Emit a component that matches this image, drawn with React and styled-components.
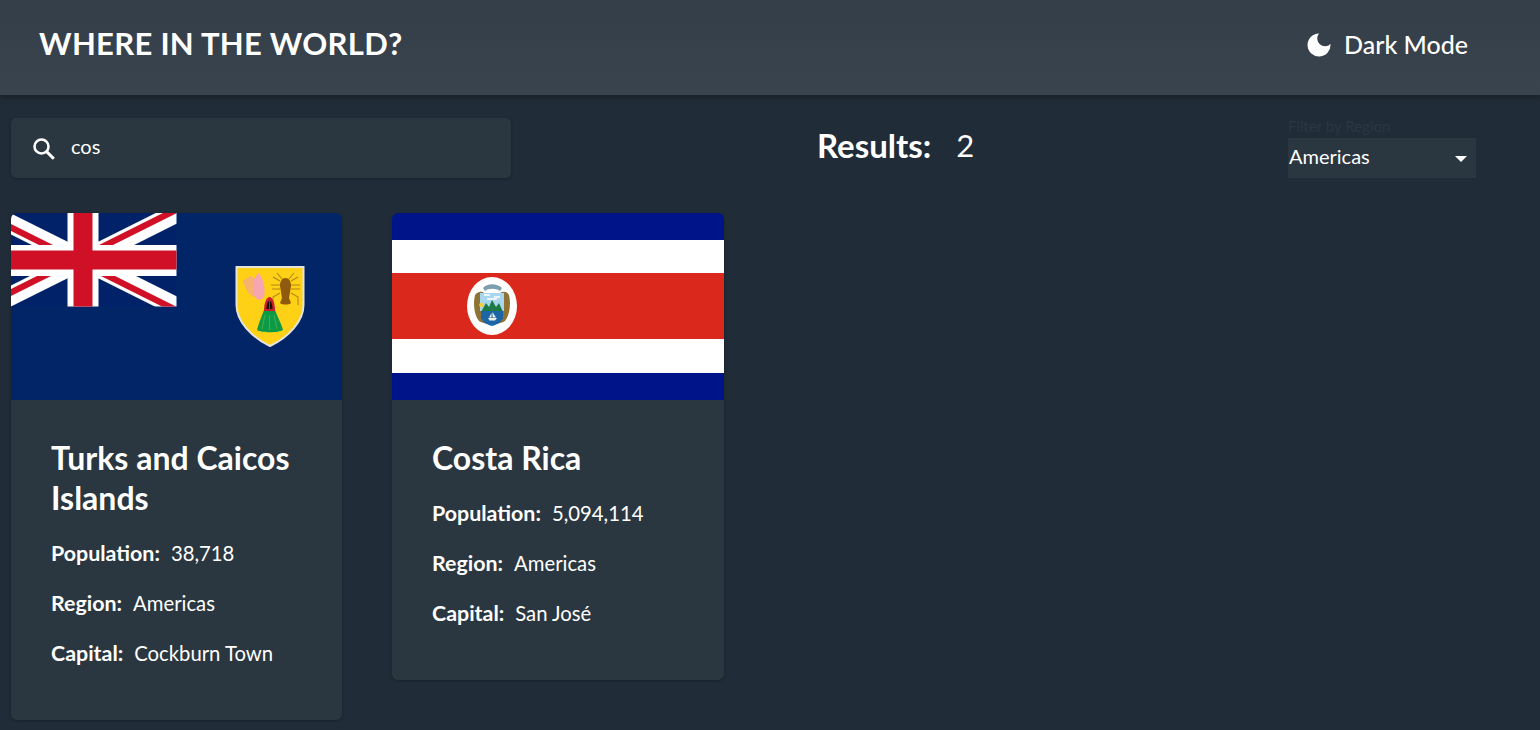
import React from 'react';
import styled, { createGlobalStyle } from 'styled-components';

const GlobalStyle = createGlobalStyle`
  html, body {
    margin: 0;
    padding: 0;
    background: #202c37;
    color: #fff;
    font-family: Lato, "Open Sans", sans-serif;
    overflow: hidden;
  }
`;

const Page = styled.div`
  height: 730px;
  overflow: hidden;
`;

const Header = styled.header`
  height: 95px;
  box-sizing: border-box;
  padding: 0 72px 8px 39px;
  display: flex;
  align-items: center;
  justify-content: space-between;
  background: linear-gradient(#343e48, #3a444e);
  box-shadow: 0 2px 6px rgba(0, 0, 0, 0.3);
`;

const Title = styled.h1`
  margin: 0 0 2px;
  font-size: 31px;
  font-weight: 700;
  letter-spacing: 0.3px;
`;

const ThemeToggle = styled.div`
  display: flex;
  align-items: center;
  gap: 13px;
  font-size: 25px;
  font-weight: 500;
`;

const Main = styled.main`
  padding: 23px 0 0 11px;
`;

const Toolbar = styled.div`
  display: grid;
  grid-template-columns: 500px 1fr 188px;
  height: 60px;
  padding-right: 64px;
  margin-bottom: 35px;
`;

const Search = styled.div`
  display: flex;
  align-items: center;
  gap: 15px;
  padding-left: 20px;
  background: #2b3740;
  border-radius: 5px;
  box-shadow: 0 1px 3px rgba(0, 0, 0, 0.25);
  font-size: 20px;
`;

const SearchText = styled.span`
  margin-bottom: 5px;
`;

const Results = styled.div`
  display: flex;
  align-items: center;
  gap: 25px;
  padding: 0 0 6px 306px;
  font-size: 33px;
`;

const ResultsLabel = styled.strong`
  font-weight: 700;
`;

const ResultsValue = styled.span`
  font-size: 31px;
  font-weight: 400;
`;

const Filter = styled.div`
  display: flex;
  flex-direction: column;
  justify-content: flex-end;
`;

const FilterLabel = styled.div`
  height: 20px;
  font-size: 15px;
  line-height: 16px;
  color: #2a3742;
`;

const Select = styled.div`
  height: 40px;
  padding: 0 9px 4px 1px;
  box-sizing: border-box;
  display: flex;
  align-items: center;
  justify-content: space-between;
  background: #2b3740;
  font-size: 20px;
`;

const Caret = styled.span`
  width: 0;
  height: 0;
  margin-top: 6px;
  border-left: 6.500px solid transparent;
  border-right: 6.500px solid transparent;
  border-top: 6.500px solid #fff;
`;

const Cards = styled.div`
  display: flex;
  align-items: flex-start;
  gap: 50px;
`;

const Card = styled.article`
  width: ${(props) => props.$width}px;
  background: #2b3740;
  border-radius: 6px;
  overflow: hidden;
  box-shadow: 0 1px 3px rgba(0, 0, 0, 0.25);
`;

const Flag = styled.svg`
  display: block;
  width: 100%;
  height: 187px;
`;

const CardBody = styled.div`
  padding: 38px 40px 42px;
`;

const CardTitle = styled.h2`
  margin: 0 0 10px;
  font-size: 32px;
  line-height: 40px;
  font-weight: 700;
`;

const Stat = styled.div`
  height: 50px;
  font-size: 20.300px;
  line-height: 50px;
  font-weight: 400;
  white-space: nowrap;
`;

const StatLabel = styled.strong`
  font-size: 21.400px;
  font-weight: 700;
  margin-right: 11px;
`;

const MoonSvg = styled.svg`
  margin-top: 2px;
`;

const MoonIcon = () => (
  <MoonSvg width="24" height="24" viewBox="0 0 24 24">
    <path d="M12 .5A11.500 11.500 0 1 0 23.500 11 7.800 7.800 0 0 1 12 .5Z" fill="#fff" />
  </MoonSvg>
);

const SearchIcon = () => (
  <svg width="25" height="25" viewBox="0 0 25 25" fill="none" stroke="#fff">
    <circle cx="10.500" cy="10.500" r="7" strokeWidth="2.600" />
    <path d="M15.600 15.600 22.800 22.800" strokeWidth="3" />
  </svg>
);

const UnionJack = () => (
  <g clipPath="url(#canton)">
    <path d="M0 0H165V93.500H0Z" fill="#012169" />
    <path d="M-22 0 166 94M166 0-22 94" stroke="#fff" strokeWidth="19" />
    <path d="M0 11 72 47V54L0 18ZM72 47 166 0V-7L72 40ZM72 47 166 94V101L72 54ZM0 83 72 47V40L0 76Z" fill="#cf1027" />
    <path d="M72 0V94M0 47.500H166" stroke="#fff" strokeWidth="31" />
    <path d="M72 0V94M0 47H166" stroke="#cf1027" strokeWidth="19" />
  </g>
);

const TurksShield = () => (
  <g filter="url(#soft)">
    <path d="M225.500 54H292.500V92C292.500 108 278 124 259 133 240 124 225.500 108 225.500 92Z" fill="#fed014" stroke="#e4e4dc" strokeWidth="2" />
    <path d="M232 68 240 63 243 66 247 60C252 64 255 74 253 84 250 88 246 87 244 84 238 82 235 76 232 68Z" fill="#f5a6b0" />
    <path d="M232 68 240 63 243 66C241 72 242 79 244 84 238 82 235 76 232 68Z" fill="#f6b26e" />
    <path d="M271 66 266 60M278 66 283 60M269 68 262 64M280 68 287 64M269 72H260M280 72H289M269 76H261M280 76H289M269 80 262 84V92M280 80 287 84V92" fill="none" stroke="#b5851f" strokeWidth="1.100" />
    <path d="M274.500 65C278 65 280 68 280 73L278 85 280 90C278 92 271 92 269 90L271 85 269 73C269 68 271 65 274.500 65Z" fill="#8f5a08" />
    <path d="M253 97H264C267 105 271 112 272 117 268 120 250 120 246 117 247 112 250 105 253 97Z" fill="#0f9a45" />
    <path d="M253 98C253 89 256 84 258.500 84 261 84 264 89 264 98Z" fill="#cc1b2e" />
    <path d="M255.500 96C255.500 91 257 88 258 88V96ZM259 96V88C260 88 261.500 91 261.500 96Z" fill="#1a1010" />
    <path d="M254 102 251 116M258.500 102V117M263 102 266 116" stroke="#58b558" strokeWidth=".7" />
  </g>
);

const TurksFlag = () => (
  <Flag viewBox="0 0 331 187" preserveAspectRatio="none">
    <defs>
      <clipPath id="canton"><rect width="165.500" height="93.500" /></clipPath>
      <filter id="soft"><feGaussianBlur stdDeviation=".4" /></filter>
    </defs>
    <rect width="331" height="187" fill="#012566" />
    <UnionJack />
    <TurksShield />
  </Flag>
);

const CostaRicaEmblem = () => (
  <g filter="url(#softer)">
    <path d="M83 82C86 78 90 78 92 80L108 80C111 78 115 78 117 82 119 90 118 102 113 108 108 112 92 112 87 108 82 102 81 90 83 82Z" fill="#8f7336" />
    <path d="M91 75C95 70 105 70 110 75L108 78C104 75 96 75 93 78Z" fill="#7d9fb0" />
    <path d="M88 80H112V98H88Z" fill="#a8d6ee" />
    <path d="M92 82H98M102 84H108M95 86H105" stroke="#fff" strokeWidth="1.400" />
    <circle cx="89.500" cy="92" r="2.300" fill="#f2d13a" />
    <path d="M89 99 94 90 97 94 100 87 104 94 107 90 111 99Z" fill="#1f7a42" />
    <path d="M89 98H111V105C109 110 104 112 100 113 96 112 91 110 89 105Z" fill="#1c66a8" />
    <path d="M96 105H105L103 107.500H97.500ZM97 104.500 99.500 100V104.500ZM100.500 99 104 104.500H100.500Z" fill="#eef0e8" />
  </g>
);

const CostaRicaFlag = () => (
  <Flag viewBox="0 0 332 187" preserveAspectRatio="none">
    <defs>
      <filter id="softer"><feGaussianBlur stdDeviation=".45" /></filter>
    </defs>
    <rect width="332" height="187" fill="#00148a" />
    <rect y="27" width="332" height="133" fill="#fff" />
    <rect y="60" width="332" height="66" fill="#da291c" />
    <ellipse cx="100" cy="93" rx="25" ry="29" fill="#fff" />
    <CostaRicaEmblem />
  </Flag>
);

const countries = [
  {
    name: 'Turks and Caicos Islands',
    population: '38,718',
    region: 'Americas',
    capital: 'Cockburn Town',
    width: 331,
    FlagImage: TurksFlag
  },
  {
    name: 'Costa Rica',
    population: '5,094,114',
    region: 'Americas',
    capital: 'San José',
    width: 332,
    FlagImage: CostaRicaFlag
  }
];

export default function App() {
  return (
    <Page>
      <GlobalStyle />
      <Header>
        <Title>WHERE IN THE WORLD?</Title>
        <ThemeToggle>
          <MoonIcon />
          <span>Dark Mode</span>
        </ThemeToggle>
      </Header>
      <Main>
        <Toolbar>
          <Search>
            <SearchIcon />
            <SearchText>cos</SearchText>
          </Search>
          <Results>
            <ResultsLabel>Results:</ResultsLabel>
            <ResultsValue>2</ResultsValue>
          </Results>
          <Filter>
            <FilterLabel>Filter by Region</FilterLabel>
            <Select>
              <span>Americas</span>
              <Caret />
            </Select>
          </Filter>
        </Toolbar>
        <Cards>
          {countries.map(({ name, population, region, capital, width, FlagImage }) => (
            <Card key={name} $width={width}>
              <FlagImage />
              <CardBody>
                <CardTitle>{name}</CardTitle>
                <Stat><StatLabel>Population:</StatLabel>{population}</Stat>
                <Stat><StatLabel>Region:</StatLabel>{region}</Stat>
                <Stat><StatLabel>Capital:</StatLabel>{capital}</Stat>
              </CardBody>
            </Card>
          ))}
        </Cards>
      </Main>
    </Page>
  );
}
